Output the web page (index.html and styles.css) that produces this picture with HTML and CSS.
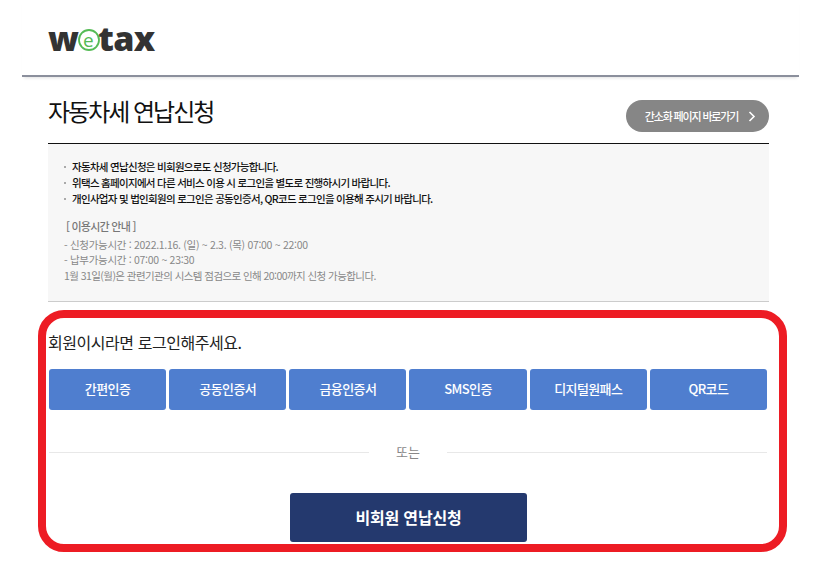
FILE: index.html
```html
<!DOCTYPE html>
<html lang="ko">
<head>
<meta charset="utf-8">
<title>자동차세 연납신청</title>
<link rel="stylesheet" href="styles.css">
</head>
<body>
<div class="page">
  <header class="top">
    <div class="logo">
      <span>w</span>
      <svg class="logo-e" width="22" height="22" viewBox="0 0 22 22" aria-hidden="true">
        <circle cx="11" cy="11" r="10" fill="none" stroke="#55bb55" stroke-width="1.8"/>
      </svg>
      <span class="logo-e-letter">e</span>
      <span>tax</span>
    </div>
  </header>
  <main class="content">
    <div class="title-row">
      <h1 class="title">자동차세 연납신청</h1>
      <a class="simple-btn">간소화 페이지 바로가기
        <svg width="8" height="11" viewBox="0 0 8 11" aria-hidden="true"><path d="M1.5 1l4.5 4.5-4.5 4.5" fill="none" stroke="#fff" stroke-width="1.6"/></svg>
      </a>
    </div>
    <section class="notice">
      <ul class="notice-list">
        <li>자동차세 연납신청은 비회원으로도 신청가능합니다.</li>
        <li>위택스 홈페이지에서 다른 서비스 이용 시 로그인을 별도로 진행하시기 바랍니다.</li>
        <li>개인사업자 및 법인회원의 로그인은 공동인증서, QR코드 로그인을 이용해 주시기 바랍니다.</li>
      </ul>
      <p class="hours-title">[ 이용시간 안내 ]</p>
      <p class="hours">- 신청가능시간 : 2022.1.16. (일) ~ 2.3. (목) 07:00 ~ 22:00</p>
      <p class="hours">- 납부가능시간 : 07:00 ~ 23:30</p>
      <p class="hours hours-note">1월 31일(월)은 관련기관의 시스템 점검으로 인해 20:00까지 신청 가능합니다.</p>
    </section>
    <section class="login">
      <p class="login-lead">회원이시라면 로그인해주세요.</p>
      <div class="login-grid">
        <a class="login-btn">간편인증</a>
        <a class="login-btn">공동인증서</a>
        <a class="login-btn">금융인증서</a>
        <a class="login-btn">SMS인증</a>
        <a class="login-btn">디지털원패스</a>
        <a class="login-btn">QR코드</a>
      </div>
      <div class="divider"><span>또는</span></div>
      <div class="guest-row"><a class="guest-btn">비회원 연납신청</a></div>
      <div class="highlight"></div>
    </section>
  </main>
</div>
</body>
</html>
```
FILE: styles.css
```css
* { box-sizing: border-box; }
html, body { margin: 0; padding: 0; background: #fff; }
body {
  font-family: "Noto Sans CJK KR", "Noto Sans", sans-serif;
  color: #111;
  overflow: hidden;
}
.page { width: 817px; height: 564px; padding: 0 18px 0 22px; }
.top {
  height: 77px;
  padding: 16px 0 0 26px;
  border-bottom: 2px solid #8b8f9c;
  box-shadow: 0 3px 3px -2px rgba(0,0,0,.12);
}
.logo {
  position: relative;
  display: flex;
  align-items: center;
  height: 44px;
  font-family: "Open Sans", "DejaVu Sans", sans-serif;
  font-weight: 800;
  font-size: 34px;
  line-height: 44px;
  color: #333;
  letter-spacing: -0.7px;
}
.logo-e { margin: 3px -2px 0 0; flex: none; }
.logo-e-letter {
  position: absolute;
  left: 29px;
  top: 0;
  width: 22px;
  text-align: center;
  font-size: 19px;
  font-weight: 400;
  line-height: 48px;
  color: #55bb55;
}
.content { padding: 0 30px 0 26px; }
.title-row {
  display: flex;
  justify-content: space-between;
  align-items: flex-start;
  height: 67px;
  padding-top: 23px;
  border-bottom: 1px solid #111;
}
.title {
  margin: -1px 0 0;
  font-size: 24px;
  font-weight: 400;
  line-height: 24px;
  letter-spacing: -2px;
  color: #111;
}
.simple-btn {
  display: flex;
  align-items: center;
  justify-content: center;
  gap: 10px;
  width: 143px;
  height: 32px;
  border-radius: 16px;
  background: #868686;
  color: #fff;
  font-size: 11px;
  font-weight: 500;
  letter-spacing: -1.15px;
  padding-left: 6px;
}
.notice {
  height: 158px;
  padding: 15px 16px 0;
  background: #f7f7f7;
  border-bottom: 1px solid #ccc;
  font-size: 10.5px;
}
.notice-list { margin: 0; padding: 0; list-style: none; }
.notice-list li {
  height: 16px;
  line-height: 16px;
  font-weight: 500;
  color: #111;
  letter-spacing: -0.71px;
  padding-left: 8px;
  position: relative;
}
.notice-list li::before {
  content: "";
  position: absolute;
  left: 0;
  top: 7px;
  width: 2px;
  height: 2px;
  background: #aaa;
}
.hours-title {
  margin: 11px 0 3px 2px;
  line-height: 16px;
  font-size: 11px;
  font-weight: 500;
  color: #777;
  letter-spacing: -0.75px;
}
.hours {
  margin: 0;
  line-height: 15px;
  color: #888;
  letter-spacing: -0.3px;
}
.hours-note { letter-spacing: -0.57px; margin-top: 1px; }
.login { position: relative; padding-top: 28px; }
.login-lead {
  margin: 0;
  font-size: 16px;
  line-height: 24px;
  letter-spacing: -0.45px;
  color: #222;
}
.login-grid {
  display: grid;
  grid-template-columns: repeat(6, 1fr);
  gap: 3px;
  margin: 15px 2px 0 1px;
}
.login-btn {
  display: flex;
  align-items: center;
  justify-content: center;
  height: 41px;
  border-radius: 3px;
  background: #4f7ecf;
  color: #fff;
  font-size: 13px;
  font-weight: 500;
  letter-spacing: -0.6px;
  padding-bottom: 3px;
}
.divider {
  display: flex;
  align-items: center;
  justify-content: center;
  margin: 31px 2px 0 1px;
  height: 20px;
  font-size: 13px;
  color: #888;
}
.divider::before, .divider::after {
  content: "";
  flex: 1;
  height: 1px;
  background: #e8e8e8;
  margin-top: 3px;
}
.divider span { padding: 0 27px; }
.guest-row { display: flex; justify-content: center; margin-top: 32px; }
.guest-btn {
  display: flex;
  align-items: center;
  justify-content: center;
  width: 237px;
  height: 49px;
  border-radius: 3px;
  background: #24396e;
  color: #fff;
  font-size: 16px;
  font-weight: 700;
  letter-spacing: -0.2px;
  padding-bottom: 2px;
}
.highlight {
  position: absolute;
  left: -10px;
  right: -18px;
  top: 8px;
  height: 242px;
  border: 8px solid #ed1c24;
  border-radius: 26px;
  pointer-events: none;
}
```
